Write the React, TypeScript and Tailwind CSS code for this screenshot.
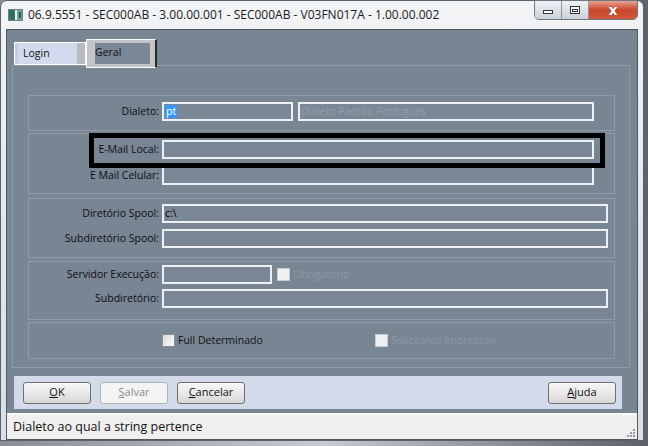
import React from "react";

const FONT = { fontFamily: '"Open Sans", "Noto Sans", sans-serif' };

function Field({ className = "", children }: { className?: string; children?: React.ReactNode }) {
  return (
    <div
      className={`h-[19px] border-2 border-[#eef1f3] bg-[#7a8796] flex items-center px-[1px] text-[10.5px] ${className}`}
    >
      {children}
    </div>
  );
}

function Row({ label, children, className = "" }: { label: string; children: React.ReactNode; className?: string }) {
  return (
    <div className={`flex items-center ${className}`}>
      <div className="w-[131px] pr-[1px] text-right text-[10.5px] text-[#0d0d0d] whitespace-nowrap">{label}</div>
      <div className="flex flex-1 items-center gap-[5px] pl-[2px]">{children}</div>
    </div>
  );
}

function Check({ label, disabled }: { label: string; disabled?: boolean }) {
  return (
    <div className="flex items-center gap-[3px]">
      <div
        className={`w-[13px] h-[13px] border ${
          disabled ? "border-[#c9cdd1] bg-[#eef0f2]" : "border-[#8a8f94] bg-gradient-to-br from-[#dcdcdc] to-[#fbfbfb]"
        }`}
      />
      <span className={`text-[10.5px] ${disabled ? "text-[#8b97a2]" : "text-[#111]"}`}>{label}</span>
    </div>
  );
}

function Group({ className = "", children }: { className?: string; children: React.ReactNode }) {
  return <div className={`border border-[#8f9ba7] ${className}`}>{children}</div>;
}

function Btn({ children, disabled, className = "" }: { children: React.ReactNode; disabled?: boolean; className?: string }) {
  return (
    <div
      className={`w-[68px] h-[22px] rounded-[3px] border flex items-center justify-center text-[11px] ${
        disabled
          ? "border-[#adb2b5] bg-[#f4f4f4] text-[#8a8a8a]"
          : "border-[#707070] bg-gradient-to-b from-[#f6f6f6] via-[#e9e9e9] to-[#d6d6d6] text-[#111]"
      } ${className}`}
    >
      {children}
    </div>
  );
}

export default function App() {
  return (
    <div
      className="w-[648px] h-[446px] overflow-hidden bg-gradient-to-r from-[#8a8e92] via-[#c8ccd0] to-[#5d6268]"
      style={FONT}
    >
      {/* ================= WINDOW ================= */}
      <div className="w-[644px] h-[441px] rounded-t-[7px] border border-[#59626b] bg-gradient-to-b from-[#f2f4f6] via-[#e3e8ec] to-[#d9dfe4] flex flex-col px-[5px] pb-[2px]">
        {/* title bar */}
        <div className="h-[28px] flex items-start shrink-0">
          <div className="mt-[8px] ml-[2px] w-[15px] h-[12px] border border-[#6f7d82] bg-[#e8eef0] flex">
            <div className="w-[6px] h-full bg-[#2f6f66]" />
            <div className="w-[2px] h-full bg-[#eef5f3]" />
            <div className="flex-1 bg-[#6aa598] flex items-center justify-center">
              <div className="w-[2px] h-[6px] bg-[#2c5a53]" />
            </div>
          </div>
          <div className="ml-[5px] mt-[5px] text-[12px] text-[#1a1a1a] whitespace-nowrap">
            06.9.5551 - SEC000AB - 3.00.00.001 - SEC000AB - V03FN017A - 1.00.00.002
          </div>
          <div className="ml-auto flex h-[20px] mt-[-1px] rounded-b-[5px] border border-[#6d7780] overflow-hidden">
            <div className="w-[27px] bg-gradient-to-b from-[#eef2f5] to-[#c9d2da] border-r border-[#8d97a0] flex items-center justify-center">
              <div className="w-[10px] h-[4px] mt-[4px] border border-[#333] bg-white" />
            </div>
            <div className="w-[27px] bg-gradient-to-b from-[#eef2f5] to-[#c9d2da] border-r border-[#8d97a0] flex items-center justify-center">
              <div className="w-[10px] h-[8px] border border-[#333] bg-white flex items-center justify-center">
                <div className="w-[6px] h-[3px] border border-[#333]" />
              </div>
            </div>
            <div className="w-[48px] bg-gradient-to-b from-[#e8a18f] via-[#c9462c] to-[#d2583c] flex items-center justify-center">
              <span
                className="text-white text-[14px] font-bold leading-none [text-shadow:0_0_1px_#5a1a10]"
                style={{ fontFamily: '"DejaVu Sans", sans-serif' }}
              >
                x
              </span>
            </div>
          </div>
        </div>

        {/* client area */}
        <div className="flex-1 flex flex-col border border-[#4f5861]">
          <div className="flex-1 bg-[#788694] flex flex-col pt-[9px] pb-[4px]">
            {/* tabs */}
            <div className="flex items-end ml-[7px] h-[29px] relative z-10 -mb-[3px]">
              <div className="w-[72px] h-[23px] mb-[3px] border border-white bg-[#d2daee] flex">
                <div className="w-[3px] bg-[#c7ccd8]" />
                <div className="flex-1 pl-[5px] pt-[3px] text-[10.5px] text-[#111]">Login</div>
                <div className="w-[8px] bg-[#b8bcc2]" />
              </div>
              <div className="w-[71px] h-[29px] border-t border-l border-b border-white border-r-2 border-r-[#2a2a2a] bg-[#c3c5c8] pt-[3px] pl-[8px] pr-[5px] pb-[3px]">
                <div className="h-full bg-[#7a8796] text-[10.5px] text-[#111] pt-[2px]">Geral</div>
              </div>
            </div>

            {/* tab panel */}
            <div className="ml-[5px] mr-[7px] border border-[#8f9ba7] pt-[29px] pb-[8px] pl-[15px] pr-[14px] flex flex-col">
              <Group className="h-[36px] pt-[6px]">
                <Row label="Dialeto:" className="pr-[20px]">
                  <Field className="w-[131px]">
                    <span className="bg-[#3399ff] text-white px-[1px] leading-[13px]">pt</span>
                  </Field>
                  <Field className="flex-1 text-[#94a0ab]">Dialeto Padrão Português</Field>
                </Row>
              </Group>

              <Group className="h-[61px] mt-[2px] pt-[6px] relative">
                <div className="absolute left-[60px] right-[9px] top-[-1px] h-[35px] border-[5px] border-black" />
                <Row label="E-Mail Local:" className="pr-[20px]">
                  <Field className="flex-1" />
                </Row>
                <Row label="E Mail Celular:" className="pr-[20px] mt-[7px]">
                  <Field className="flex-1 h-[18px]" />
                </Row>
              </Group>

              <Group className="h-[60px] mt-[4px] pt-[5px]">
                <Row label="Diretório Spool:" className="pr-[6px]">
                  <Field className="flex-1">c:\</Field>
                </Row>
                <Row label="Subdiretório Spool:" className="pr-[6px] mt-[6px]">
                  <Field className="flex-1" />
                </Row>
              </Group>

              <Group className="h-[59px] mt-[3px] pt-[3px]">
                <Row label="Servidor Execução:" className="pr-[6px]">
                  <Field className="w-[110px]" />
                  <Check label="Obrigatório" disabled />
                </Row>
                <Row label="Subdiretório:" className="pr-[6px] mt-[5px]">
                  <Field className="flex-1" />
                </Row>
              </Group>

              <Group className="h-[37px] mt-[2px] flex items-center">
                <div className="ml-[133px] w-[213px]">
                  <Check label="Full Determinado" />
                </div>
                <Check label="Solicitante Impressao" disabled />
              </Group>
            </div>

            {/* button bar */}
            <div className="ml-[7px] mr-[15px] mt-[8px] h-[33px] bg-[#d3dbeb] flex items-center pl-[9px] pr-[6px] gap-[9px]">
              <Btn>
                <span className="underline">O</span>K
              </Btn>
              <Btn disabled>
                <span className="underline">S</span>alvar
              </Btn>
              <Btn>
                <span className="underline">C</span>ancelar
              </Btn>
              <Btn className="ml-auto">
                <span className="underline">A</span>juda
              </Btn>
            </div>
          </div>

          {/* status bar */}
          <div className="h-[26px] shrink-0 border-t-2 border-[#fafafa] bg-[#efefef] flex items-center justify-between pl-[6px] pr-[2px]">
            <span className="text-[12.5px] text-[#111]">Dialeto ao qual a string pertence</span>
            <div className="self-end mb-[2px] grid grid-cols-3 gap-[1px]">
              <div />
              <div />
              <div className="w-[2px] h-[2px] bg-[#9a9a9a]" />
              <div />
              <div className="w-[2px] h-[2px] bg-[#9a9a9a]" />
              <div className="w-[2px] h-[2px] bg-[#9a9a9a]" />
              <div className="w-[2px] h-[2px] bg-[#9a9a9a]" />
              <div className="w-[2px] h-[2px] bg-[#9a9a9a]" />
              <div className="w-[2px] h-[2px] bg-[#9a9a9a]" />
            </div>
          </div>
        </div>
      </div>
    </div>
  );
}
